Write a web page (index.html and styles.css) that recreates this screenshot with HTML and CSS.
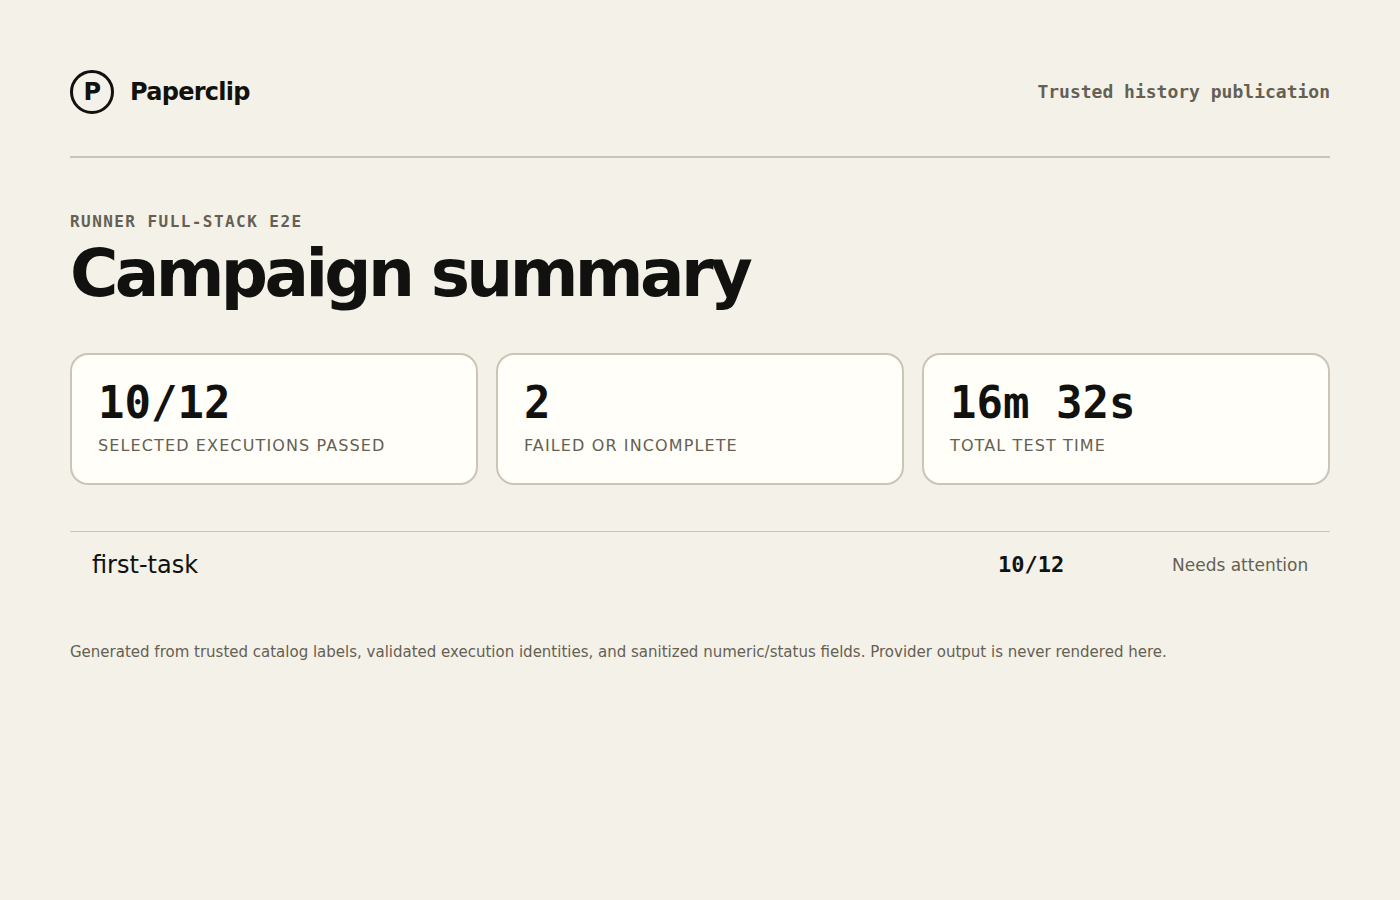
FILE: index.html
```html
<!DOCTYPE html>
<html lang="en">
<head>
<meta charset="utf-8">
<title>Campaign summary</title>
<link rel="stylesheet" href="styles.css">
</head>
<body>
<main class="page">
  <header class="header">
    <div class="brand"><span class="mark">P</span><span>Paperclip</span></div>
    <div class="tag">Trusted history publication</div>
  </header>
  <p class="eyebrow">Runner full-stack E2E</p>
  <h1 class="title">Campaign summary</h1>
  <section class="cards">
    <div class="card"><strong class="value">10/12</strong><span class="label">Selected executions passed</span></div>
    <div class="card"><strong class="value">2</strong><span class="label">Failed or incomplete</span></div>
    <div class="card"><strong class="value">16m 32s</strong><span class="label">Total test time</span></div>
  </section>
  <table class="tasks">
    <tbody>
      <tr><td class="task">first-task</td><td class="score">10/12</td><td class="status">Needs attention</td></tr>
    </tbody>
  </table>
  <footer class="note">Generated from trusted catalog labels, validated execution identities, and sanitized numeric/status fields. Provider output is never rendered here.</footer>
</main>
</body>
</html>
```
FILE: styles.css
```css
* { box-sizing: border-box; }
body {
  margin: 0;
  background: #f4f1e8;
  color: #11110f;
  font-family: "DejaVu Sans", sans-serif;
}
.page { padding: 70px; }
.header {
  display: flex;
  align-items: center;
  justify-content: space-between;
  padding-bottom: 42px;
  border-bottom: 2px solid #cbc4b7;
}
.brand {
  display: flex;
  align-items: center;
  gap: 16px;
  font-size: 24px;
  font-weight: 700;
  letter-spacing: -0.03em;
}
.mark {
  display: grid;
  place-items: center;
  width: 44px;
  height: 44px;
  border: 3px solid #11110f;
  border-radius: 50%;
}
.tag {
  color: #655f54;
  font: 700 18px/22px "DejaVu Sans Mono", monospace;
}
.eyebrow {
  margin: 54px 0 0;
  color: #655f54;
  font: 700 16px/20px "DejaVu Sans Mono", monospace;
  letter-spacing: 0.09em;
  text-transform: uppercase;
}
.title {
  margin: 8px 0 46px;
  font-size: 66px;
  line-height: 67px;
  letter-spacing: -0.055em;
}
.cards {
  display: grid;
  grid-template-columns: repeat(3, 1fr);
  gap: 18px;
}
.card {
  padding: 22px 26px 26px;
  border: 2px solid #cbc4b7;
  border-radius: 18px;
  background: #fffef8;
}
.value {
  display: block;
  font: 700 44px/52px "DejaVu Sans Mono", monospace;
}
.label {
  display: block;
  margin-top: 6px;
  color: #655f54;
  font-size: 16px;
  line-height: 22px;
  letter-spacing: 0.07em;
  text-transform: uppercase;
}
.tasks {
  width: 100%;
  margin-top: 46px;
  border-top: 1px solid #cbc4b7;
  border-spacing: 0;
  table-layout: fixed;
}
.tasks td { padding: 18px 22px; line-height: 30px; }
.task { font-size: 24px; }
.score {
  width: 174px;
  font: 700 22px "DejaVu Sans Mono", monospace;
}
.status {
  width: 180px;
  color: #655f54;
  font-size: 17px;
  text-align: right;
  white-space: nowrap;
}
.note {
  margin-top: 44px;
  color: #655f54;
  font-size: 15px;
  line-height: 20px;
}
```
